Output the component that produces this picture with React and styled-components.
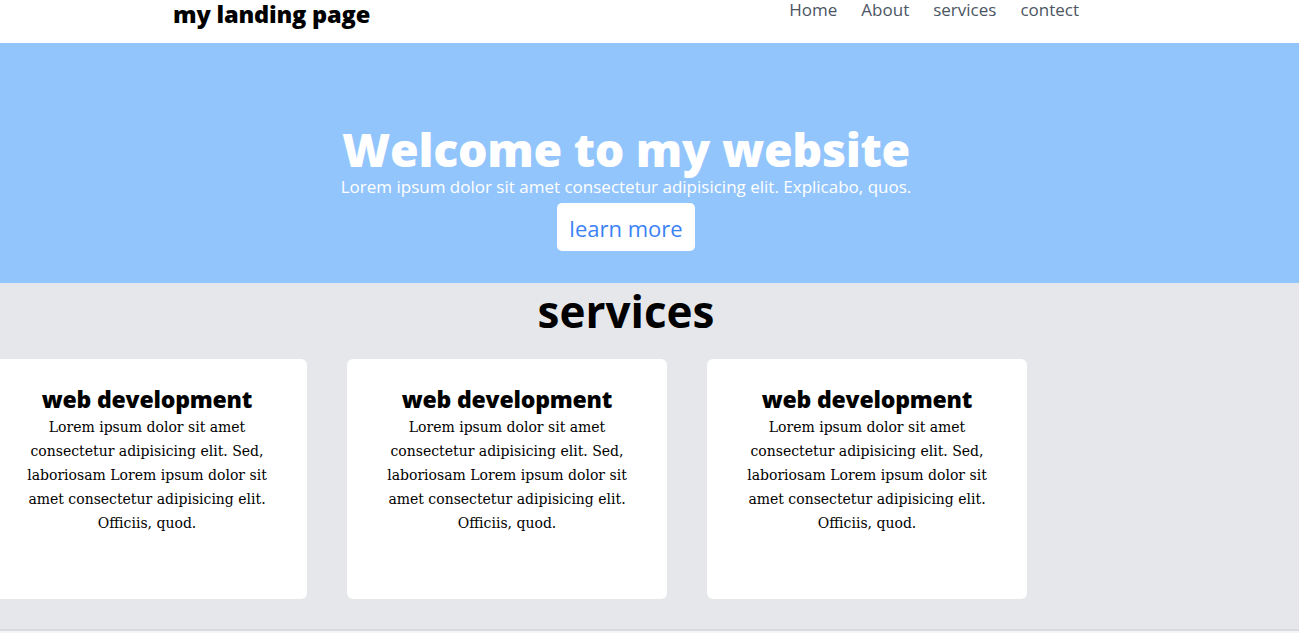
import React from 'react'
import styled, { createGlobalStyle } from 'styled-components';

const GlobalStyle = createGlobalStyle`
  body{
    margin:0;
    font-family:"Open Sans", "Noto Sans", sans-serif;
    background:#f3f4f6;
    overflow-x:hidden;
  }
  h1,h2,h3,p{
    margin:0;
  }
`;

const Inner = styled.div`
  width:1252px;
  box-sizing:border-box;
`;

const NavBar = styled.nav`
  background:white;
  height:43px;
`;
const NavInner = styled(Inner)`
  display:flex;
  justify-content:space-between;
  align-items:flex-start;
  padding:0 173px;
`;
const Brand = styled.div`
  font-size:23.6px;
  font-weight:800;
  line-height:28px;
  color:black;
  letter-spacing:-0.2px;
`;
const Links = styled.ul`
  display:flex;
  gap:24px;
  list-style:none;
  margin:0;
  padding:0;
`;
const LinkItem = styled.li`
  font-size:17px;
  line-height:20px;
  color:#4b5563;
`;

const Hero = styled.section`
  background:#93c5fd;
  height:240px;
  box-sizing:border-box;
  padding-top:82px;
`;
const HeroInner = styled(Inner)`
  display:flex;
  flex-direction:column;
  align-items:center;
  color:white;
`;
const HeroTitle = styled.h1`
  font-size:46.5px;
  line-height:48px;
  font-weight:800;
  letter-spacing:-0.3px;
`;
const HeroText = styled.p`
  font-size:17px;
  line-height:28px;
`;
const Button = styled.button`
  margin-top:2px;
  background:white;
  color:#3b82f6;
  border:none;
  border-radius:5px;
  font-family:inherit;
  font-size:22px;
  line-height:32px;
  padding:9px 12px 7px;
  width:138px;
`;

const Services = styled.section`
  background:#e5e7eb;
  height:346px;
  border-bottom:2px solid #d9dbe0;
`;
const ServicesTitle = styled.h2`
  text-align:center;
  font-size:44px;
  line-height:54px;
  font-weight:700;
  color:black;
  padding-top:1px;
`;
const CardRow = styled.div`
  display:flex;
  gap:40px;
  margin-top:21px;
  margin-left:-13px;
`;
const Card = styled.div`
  width:320px;
  height:240px;
  flex-shrink:0;
  box-sizing:border-box;
  background:white;
  border-radius:6px;
  padding:25px 28px;
  text-align:center;
`;
const CardTitle = styled.h3`
  font-size:23px;
  line-height:31px;
  font-weight:800;
  color:black;
  letter-spacing:-0.2px;
`;
const CardText = styled.p`
  font-family:"DejaVu Serif", Georgia, serif;
  font-size:14px;
  line-height:24px;
  color:black;
`;

const cards = [1, 2, 3];

export default function App() {
  return (
    <div>
      <GlobalStyle />
      <NavBar>
        <NavInner>
          <Brand>my landing page</Brand>
          <Links>
            <LinkItem>Home</LinkItem>
            <LinkItem>About</LinkItem>
            <LinkItem>services</LinkItem>
            <LinkItem>contect</LinkItem>
          </Links>
        </NavInner>
      </NavBar>
      <Hero>
        <HeroInner>
          <HeroTitle>Welcome to my website</HeroTitle>
          <HeroText>Lorem ipsum dolor sit amet consectetur adipisicing elit. Explicabo, quos.</HeroText>
          <Button>learn more</Button>
        </HeroInner>
      </Hero>
      <Services>
        <Inner>
          <ServicesTitle>services</ServicesTitle>
          <CardRow>
            {cards.map(i => (
              <Card key={`card-${i}`}>
                <CardTitle>web development</CardTitle>
                <CardText>Lorem ipsum dolor sit amet consectetur adipisicing elit. Sed, laboriosam Lorem ipsum dolor sit amet consectetur adipisicing elit. Officiis, quod.</CardText>
              </Card>
            ))}
          </CardRow>
        </Inner>
      </Services>
    </div>
  )
}
